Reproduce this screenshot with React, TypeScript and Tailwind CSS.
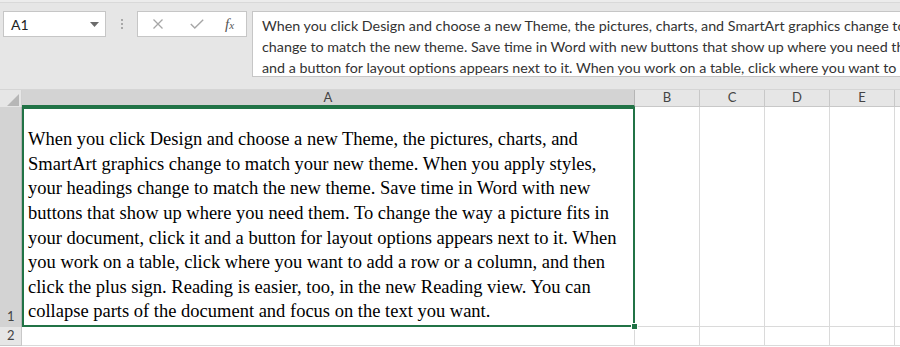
import React from "react";

const cellLines = [
  "When you click Design and choose a new Theme, the pictures, charts, and",
  "SmartArt graphics change to match your new theme. When you apply styles,",
  "your headings change to match the new theme. Save time in Word with new",
  "buttons that show up where you need them. To change the way a picture fits in",
  "your document, click it and a button for layout options appears next to it. When",
  "you work on a table, click where you want to add a row or a column, and then",
  "click the plus sign. Reading is easier, too, in the new Reading view. You can",
  "collapse parts of the document and focus on the text you want.",
];

const formulaLines = [
  "When you click Design and choose a new Theme, the pictures, charts, and SmartArt graphics change to match your new theme. When you apply styles, your headings",
  "change to match the new theme. Save time in Word with new buttons that show up where you need them. To change the way a picture fits in your document, click it",
  "and a button for layout options appears next to it. When you work on a table, click where you want to add a row or a column, and then click the plus sign.",
];

export default function App() {
  return (
    <div className="w-[900px] h-[347px] overflow-hidden bg-[#e6e6e6] flex flex-col">
      {/* top strip */}
      <div className="h-[3px] bg-[#ececec] border-b border-[#d9d9d9] shrink-0" />
      {/* formula bar area */}
      <div className="flex items-start pt-[8px] h-[86px] shrink-0 font-['Lato','Liberation_Sans',sans-serif]">
        {/* name box */}
        <div className="ml-[3px] w-[103px] h-[26px] bg-white border border-[#c6c6c6] flex items-center justify-between pl-[7px] pr-[6px]">
          <span className="text-[14px] text-[#222]">A1</span>
          <svg width="9" height="5" viewBox="0 0 9 5"><polygon points="0,0 9,0 4.5,5" fill="#6b6b6b" /></svg>
        </div>
        {/* dots */}
        <div className="w-[31px] h-[26px] flex flex-col items-center justify-center gap-[2px]">
          <div className="w-[2px] h-[2px] bg-[#a8a8a8]" />
          <div className="w-[2px] h-[2px] bg-[#a8a8a8]" />
          <div className="w-[2px] h-[2px] bg-[#a8a8a8]" />
        </div>
        {/* buttons */}
        <div className="w-[110px] h-[26px] bg-white border border-[#c6c6c6] flex items-center">
          <svg className="ml-[15px]" width="10" height="10" viewBox="0 0 10 10"><path d="M0.5 0.5 L9.5 9.5 M9.5 0.5 L0.5 9.5" stroke="#a6a6a6" strokeWidth="1.3" /></svg>
          <svg className="ml-[27px]" width="14" height="10" viewBox="0 0 14 10"><path d="M0.8 5 L4.8 9 L13.2 0.8" stroke="#a6a6a6" strokeWidth="1.4" fill="none" /></svg>
          <span className="ml-[21px] italic text-[15px] text-[#555] leading-none font-['Liberation_Serif','Times_New_Roman','DejaVu_Serif',serif]">
            f<span className="text-[11px]">x</span>
          </span>
        </div>
        {/* formula text */}
        <div className="ml-[5px] flex-1 h-[66px] bg-white border border-[#c6c6c6] border-r-0 pl-[9px] pt-[3px] overflow-hidden">
          {formulaLines.map((l, i) => (
            <div key={i} className="whitespace-nowrap text-[14.3px] leading-[21px] text-[#333]">{l}</div>
          ))}
        </div>
      </div>
      {/* column headers */}
      <div className="flex h-[18px] shrink-0 border-t border-[#d5d5d5] text-[13px] text-[#444] font-['Lato','Liberation_Sans',sans-serif]">
        <div className="w-[22px] bg-[#e6e6e6] border-r border-[#d0d0d0] flex items-end justify-end pr-[2px] pb-[1px]">
          <svg width="12" height="12" viewBox="0 0 12 12"><polygon points="0,12 12,12 12,0" fill="#b7b7b7" /></svg>
        </div>
        <div className="w-[613px] bg-[#d3d3d3] border-b-2 border-[#217346] border-r border-r-[#b5b5b5] flex items-center justify-center">A</div>
        <div className="w-[65px] bg-[#e6e6e6] border-r border-[#c8c8c8] border-b border-b-[#c8c8c8] flex items-center justify-center">B</div>
        <div className="w-[65px] bg-[#e6e6e6] border-r border-[#c8c8c8] border-b border-b-[#c8c8c8] flex items-center justify-center">C</div>
        <div className="w-[65px] bg-[#e6e6e6] border-r border-[#c8c8c8] border-b border-b-[#c8c8c8] flex items-center justify-center">D</div>
        <div className="w-[65px] bg-[#e6e6e6] border-r border-[#c8c8c8] border-b border-b-[#c8c8c8] flex items-center justify-center">E</div>
        <div className="flex-1 bg-[#e6e6e6] border-b border-[#c8c8c8]" />
      </div>
      {/* row 1 */}
      <div className="flex h-[220px] shrink-0">
        <div className="w-[22px] bg-[#d3d3d3] border-r border-[#b5b5b5] flex items-end pl-[7px] pb-[1px] text-[13px] text-[#444] font-['Lato','Liberation_Sans',sans-serif]">1</div>
        <div className="relative w-[613px] bg-white border-2 border-[#217346] flex flex-col justify-end pl-[4px] pb-[1px] font-['Liberation_Serif','Times_New_Roman','DejaVu_Serif',serif]">
          {cellLines.map((l, i) => (
            <div key={i} className="whitespace-nowrap text-[18.5px] leading-[24.6px] text-black">{l}</div>
          ))}
          <div className="absolute right-[-5px] bottom-[-5px] w-[7px] h-[7px] bg-[#217346] border border-white" />
        </div>
        <div className="w-[65px] bg-white border-r border-b border-[#dadada]" />
        <div className="w-[65px] bg-white border-r border-b border-[#dadada]" />
        <div className="w-[65px] bg-white border-r border-b border-[#dadada]" />
        <div className="w-[65px] bg-white border-r border-b border-[#dadada]" />
        <div className="flex-1 bg-white border-b border-[#dadada]" />
      </div>
      {/* row 2 */}
      <div className="flex h-[19px] shrink-0 font-['Lato','Liberation_Sans',sans-serif]">
        <div className="w-[22px] bg-[#e6e6e6] border-r border-b border-[#c8c8c8] flex items-end pl-[7px] text-[13px] text-[#444]">2</div>
        <div className="w-[613px] bg-white border-r border-b border-[#dadada]" />
        <div className="w-[65px] bg-white border-r border-b border-[#dadada]" />
        <div className="w-[65px] bg-white border-r border-b border-[#dadada]" />
        <div className="w-[65px] bg-white border-r border-b border-[#dadada]" />
        <div className="w-[65px] bg-white border-r border-b border-[#dadada]" />
        <div className="flex-1 bg-white border-b border-[#dadada]" />
      </div>
      <div className="flex-1 bg-white" />
    </div>
  );
}
